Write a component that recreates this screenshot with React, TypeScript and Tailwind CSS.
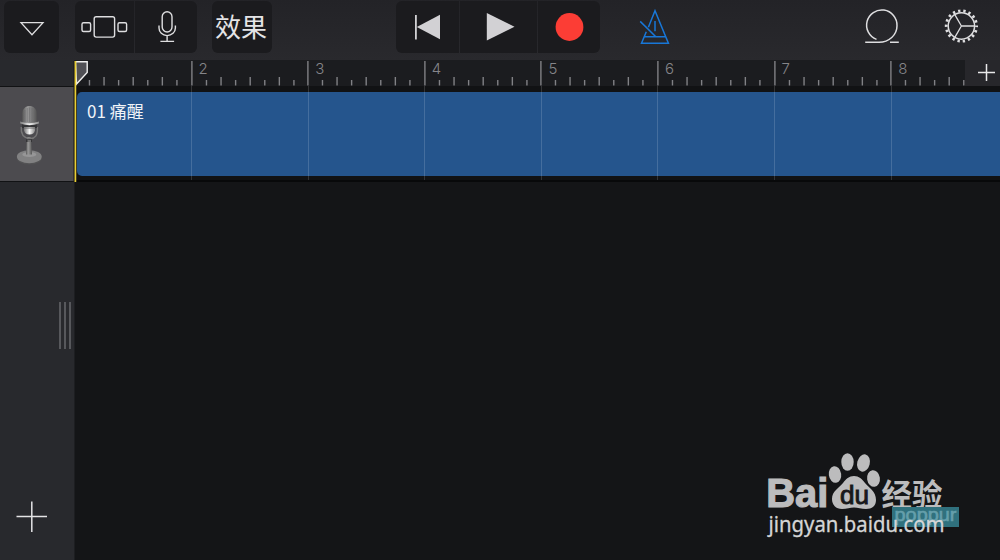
import React from "react";

const MEASURES = [1, 2, 3, 4, 5, 6, 7, 8];
const STEP = 116.6;

function Tool({ className, label, children }: { className: string; label: string; children: React.ReactNode }) {
  return (
    <button aria-label={label} className={`flex h-full items-center justify-center bg-[#1b1b1e] ${className}`}>
      {children}
    </button>
  );
}

function Toolbar() {
  return (
    <header className="flex h-[60px] shrink-0 items-start bg-linear-to-b from-[#232327] to-[#29292d] pt-px pl-1">
      <div className="flex h-[52px]">
        <Tool label="Menu" className="w-[55px] rounded-md">
          <svg width="55" height="52" fill="none" stroke="#dedee0" strokeWidth="1.3">
            <path d="M17 21.7H39L28 33.7Z" />
          </svg>
        </Tool>
      </div>
      <div className="ml-4 flex h-[52px] gap-px">
        <Tool label="Tracks" className="w-[59px] rounded-l-md">
          <svg width="59" height="52" fill="none" stroke="#dedee0" strokeWidth="1.4">
            <rect x="19.2" y="15.7" width="20.4" height="20.4" rx="2" />
            <rect x="7" y="21.7" width="8.6" height="8.8" rx="1.5" />
            <rect x="43" y="21.7" width="8.6" height="8.8" rx="1.5" />
          </svg>
        </Tool>
        <Tool label="Instrument" className="w-[62px] rounded-r-md">
          <svg width="62" height="52" fill="none" stroke="#dedee0" strokeWidth="1.4">
            <rect x="27.2" y="10.8" width="9.8" height="20.2" rx="4.9" />
            <path d="M24 24.5V27C24 31 27.4 34.6 32.1 34.6S40.4 31 40.4 27V24.5M32.1 34.6V40.4M25.4 40.4H39.1" />
          </svg>
        </Tool>
      </div>
      <div className="ml-[15px] flex h-[52px]">
        <Tool label="效果" className="w-[60px] rounded-md">
          <span className="mr-[2px] mb-[2px] font-['Noto_Sans_CJK_SC',sans-serif] text-[26px] leading-none font-normal whitespace-nowrap text-[#e4e4e6]">效果</span>
        </Tool>
      </div>
      <div className="ml-[124px] flex h-[52px] gap-px">
        <Tool label="Rewind" className="w-[63px] rounded-l-md">
          <svg width="63" height="52" fill="#d2d1d4">
            <rect x="19" y="14" width="1.8" height="24.5" />
            <path d="M20.8 26 44 13.7V38.2Z" />
          </svg>
        </Tool>
        <Tool label="Play" className="w-[77px]">
          <svg width="77" height="52" fill="#d2d1d4">
            <path d="M26.8 12V39.5L54.5 25.7Z" />
          </svg>
        </Tool>
        <Tool label="Record" className="w-[62px] rounded-r-md">
          <svg width="62" height="52">
            <circle cx="31.5" cy="26" r="13.9" fill="#fc3d35" />
          </svg>
        </Tool>
      </div>
      <button aria-label="Metronome" className="ml-[39px]">
        <svg width="32" height="52" fill="none" stroke="#1877d8" strokeWidth="1.5">
          <path d="M9.4 26.2 16 9.7 29.4 42.2H2.5L7.3 30.7M5.2 35.8H26.7M1.2 20.4 16.8 35.7M16 20V30.3" />
        </svg>
      </button>
      <button aria-label="Loops" className="ml-[193px]">
        <svg width="36" height="52" fill="none" stroke="#dedee0" strokeWidth="1.5">
          <path d="M1.2 41.2H15C25 41.2 33 34 33 24.7A15.2 15.2 0 1 0 12.5 38.4M26 41.2H34.8" />
        </svg>
      </button>
      <button aria-label="Settings" className="ml-[44px]">
        <svg width="36" height="52" fill="none" stroke="#dedee0">
          <circle cx="17.4" cy="25" r="13.2" strokeWidth="1.5" />
          <circle cx="17.4" cy="25" r="15.2" strokeWidth="2.8" strokeDasharray="2.35 2.956" strokeDashoffset="1.18" />
          <path d="M17.4 25H30.6M17.4 25 10.8 13.6M17.4 25 10.8 36.4" strokeWidth="1.3" />
        </svg>
      </button>
    </header>
  );
}

function Ruler() {
  return (
    <div className="flex h-[26px] shrink-0">
      <div className="flex w-[890px] overflow-hidden bg-[#1b1c1f]">
        {MEASURES.map((m) => (
          <div key={m} className="flex w-[116.6px] shrink-0">
            <svg width={STEP} height="26" className="-mr-[116.6px] shrink-0 overflow-visible" stroke="#818185" strokeWidth="1.4">
              {[0, 1, 2, 3, 4, 5, 6, 7].map((i) => (
                <path key={i} d={`M${i * 14.575 - 0.1} ${i === 0 ? 1 : i % 2 ? 20 : 17}V25.5`} />
              ))}
            </svg>
            {m > 1 && (
              <span className="pt-px pl-[7px] font-[Inter,sans-serif] text-[15px] leading-[16px] font-light text-[#858589]">{m}</span>
            )}
          </div>
        ))}
      </div>
      <button aria-label="Add section" className="flex w-[35px] justify-center bg-[#27272b]">
        <svg width="35" height="26" stroke="#e8e8e9" strokeWidth="1.5">
          <path d="M13 12.5H30M21.5 4V21" />
        </svg>
      </button>
    </div>
  );
}

function Microphone() {
  return (
    <svg width="32" height="64" viewBox="0 0 32 64">
      <defs>
        <linearGradient id="metal">
          <stop offset="0" stopColor="#555" />
          <stop offset=".35" stopColor="#999" />
          <stop offset=".65" stopColor="#7d7d7d" />
          <stop offset="1" stopColor="#535353" />
        </linearGradient>
        <linearGradient id="shine">
          <stop offset="0" stopColor="#777" />
          <stop offset=".5" stopColor="#f5f5f5" />
          <stop offset="1" stopColor="#888" />
        </linearGradient>
      </defs>
      <ellipse cx="16.3" cy="56" rx="12.7" ry="6.6" fill="#525254" />
      <ellipse cx="16.3" cy="54.7" rx="12.4" ry="6.5" fill="#818182" />
      <ellipse cx="16.3" cy="52.5" rx="7" ry="2.5" fill="#969697" />
      <path d="M13.8 35H18L19 52.5H13Z" fill="url(#metal)" />
      <path d="M8.2 25Q7.5 35.5 16.3 36.5T24.4 25" fill="none" stroke="#777" strokeWidth="1.4" />
      <path d="M9.2 24V11.5C9.2 1.5 23.8 1.5 23.8 11.5V24Z" fill="url(#metal)" />
      <path d="M12 8V20M14.3 6V20M16.6 5.5V20M19 6V20M21.3 8V20" stroke="#666668" strokeWidth=".5" />
      <path d="M9 21.5H23.9V26H9Z" fill="#343436" />
      <path d="M7 19.5Q16.5 23 26 19.5V21.5Q16.5 25 7 21.5Z" fill="url(#shine)" />
      <path d="M11 25H22V28.5Q21 32.5 16.5 32.5T11 28.5Z" fill="url(#shine)" />
      <path d="M11 26H22" stroke="#666" />
      <path d="M13 37.2H19V40H13Z" fill="#353537" />
      <path d="M14.5 39H18" stroke="#aaa" />
    </svg>
  );
}

function Watermark() {
  return (
    <svg className="absolute top-[448px] left-[760px]" width="205" height="94" viewBox="760 448 205 94" aria-label="Baidu">
      <g fill="#bcbcbd">
        <ellipse cx="835" cy="474.5" rx="6.2" ry="8.4" transform="rotate(-8 835 474.5)" />
        <ellipse cx="847.5" cy="462" rx="6.2" ry="8.8" />
        <ellipse cx="863.5" cy="463" rx="6.3" ry="8.8" transform="rotate(14 863.5 463)" />
        <ellipse cx="873.5" cy="478.5" rx="6.4" ry="8.4" transform="rotate(-8 873.5 478.5)" />
        <path d="M854 476C859 476 862 479 865 483 869 488 876 491 876 500 876 506 872 509 866 509 861 509 858 507.5 854 507.5S847 509 842 509C836 509 832 505 832 499 832 491 839 488 843 483 846 479 849 476 854 476Z" />
        <text x="766.3" y="507.4" textLength="62" lengthAdjust="spacingAndGlyphs" fontFamily="Liberation Sans" fontSize="40" fontWeight="700" stroke="#bcbcbd" strokeWidth="1.2">Bai</text>
        <text x="881.5" y="505.5" textLength="61" lengthAdjust="spacingAndGlyphs" fontFamily="Noto Sans CJK SC" fontSize="31" fontWeight="700">经验</text>
      </g>
      <text x="840" y="504" textLength="29" lengthAdjust="spacingAndGlyphs" fontFamily="Liberation Sans" fontSize="25" fill="#18191b" stroke="#18191b" strokeWidth=".9">du</text>
      <rect x="892" y="507" width="67" height="20" fill="#30717e" />
      <text x="894.5" y="521" textLength="62" lengthAdjust="spacingAndGlyphs" fontFamily="Liberation Sans" fontSize="19" fill="#659fab" stroke="#659fab" strokeWidth=".6">poppur</text>
      <text x="768.5" y="532" textLength="176" lengthAdjust="spacingAndGlyphs" fontFamily="Noto Sans" fontSize="21" fill="#d4d5d6" stroke="#d4d5d6" strokeWidth=".3">jingyan.baidu.com</text>
    </svg>
  );
}

export default function App() {
  return (
    <div className="relative flex h-[560px] w-[1000px] flex-col overflow-hidden bg-[#141517]">
      <Toolbar />
      <div className="flex flex-1">
        <aside className="flex w-[75px] shrink-0 flex-col border-r border-[#1d1e21] bg-[#28292d]">
          <div className="h-[26px]" />
          <div className="flex h-[96px] items-center border-y-[1.5px] border-[#111214] bg-[#4c4b4f] pb-px pl-[13px]">
            <Microphone />
          </div>
          <div className="mt-[120px] mr-[3px] flex h-[47px] justify-end gap-[3px]">
            <div className="w-[2px] bg-[#57585c]" />
            <div className="w-[2px] bg-[#57585c]" />
            <div className="w-[2px] bg-[#57585c]" />
          </div>
          <button aria-label="Add track" className="mt-[152px] ml-4 self-start">
            <svg width="32" height="32" stroke="#e4e4e5" strokeWidth="1.5">
              <path d="M.5 15.6H31M15.8.5V31" />
            </svg>
          </button>
        </aside>
        <main className="flex min-w-0 flex-1 flex-col">
          <Ruler />
          <section className="relative h-[96px] shrink-0 border-b-2 border-[#08090a] bg-[#111214] pt-1.5 pl-[2px]">
            <div className="h-[84px] rounded-l-[5px] bg-[#25558d] pt-[9px] pl-[10px] font-['Noto_Sans_CJK_SC',sans-serif] text-[17px] leading-[20px] text-[#f0f3f7]">
              01 痛醒
            </div>
            <div className="pointer-events-none absolute inset-y-0 left-0 -ml-[0.6px] flex w-full overflow-hidden">
              {MEASURES.map((m) => (
                <div key={m} className={`w-[116.6px] shrink-0 ${m > 1 ? "border-l border-white/15" : ""}`} />
              ))}
            </div>
          </section>
        </main>
      </div>
      <svg className="absolute top-[60px] left-[73px]" width="18" height="123" fill="none">
        <path d="M2.5 1.7H14.2V12.5L3.5 24Z" fill="#505055" stroke="#f0f0f0" strokeWidth="1.4" />
        <path d="M1 1V122" stroke="#181817" />
        <path d="M2.4 1V122" stroke="#e8ce35" strokeWidth="1.7" />
      </svg>
      <Watermark />
    </div>
  );
}
